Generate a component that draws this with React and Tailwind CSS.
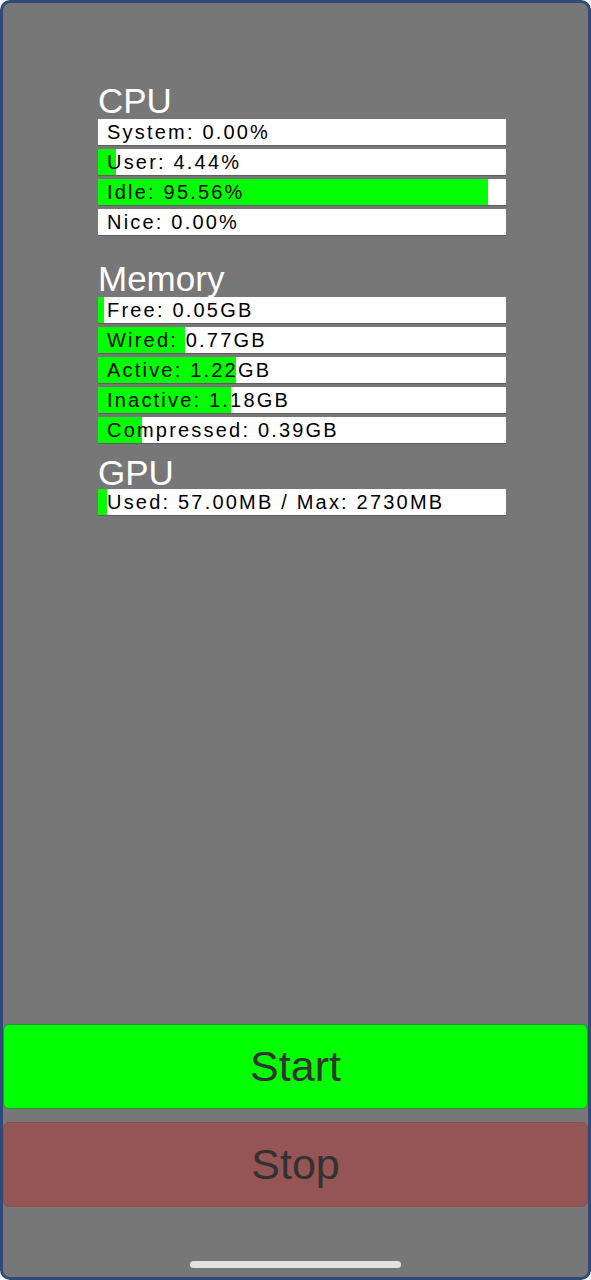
import React from "react";

const cpu = [
  { label: "System: 0.00%", pct: 0 },
  { label: "User: 4.44%", pct: 4.44 },
  { label: "Idle: 95.56%", pct: 95.56 },
  { label: "Nice: 0.00%", pct: 0 },
];

const totalMem = 3.62;
const memory = [
  { label: "Free: 0.05GB", pct: (0.05 / totalMem) * 100 },
  { label: "Wired: 0.77GB", pct: (0.77 / totalMem) * 100 },
  { label: "Active: 1.22GB", pct: (1.22 / totalMem) * 100 },
  { label: "Inactive: 1.18GB", pct: (1.18 / totalMem) * 100 },
  { label: "Compressed: 0.39GB", pct: (0.39 / totalMem) * 100 },
];

const gpu = [{ label: "Used: 57.00MB / Max: 2730MB", pct: (57 / 2730) * 100 }];

function StatRow({ label, pct }) {
  return (
    <div className="relative h-[26px] w-[408px] bg-white shadow-[0_1px_0_#5e5e5e]">
      <div
        className="absolute top-0 bottom-0 left-0 bg-[#00ff00]"
        style={{ width: `${pct}%` }}
      />
      <div className="relative pl-[9px] text-[20px] leading-[26px] tracking-[2.2px] text-black whitespace-nowrap">
        {label}
      </div>
    </div>
  );
}

function StatList({ items }) {
  return (
    <div className="flex flex-col gap-[4px]">
      {items.map((item) => (
        <StatRow key={item.label} label={item.label} pct={item.pct} />
      ))}
    </div>
  );
}

export default function App() {
  return (
    <div
      className="flex h-[1280px] w-[591px] flex-col overflow-hidden rounded-[10px] border-[3px] border-[#30497a] bg-[#777777]"
      style={{ fontFamily: '"Liberation Sans", Arial, sans-serif' }}
    >
      <div className="flex flex-col pt-[80px] pl-[95px]">
        <div className="h-[36px] text-[35px] leading-[36px] text-white">CPU</div>
        <StatList items={cpu} />

        <div className="mt-[26px] h-[36px] text-[35px] leading-[36px] text-white">
          Memory
        </div>
        <StatList items={memory} />

        <div className="mt-[13px] h-[33px] text-[35px] leading-[33px] text-white">
          GPU
        </div>
        <StatList items={gpu} />
      </div>

      <div className="mt-auto flex flex-col pb-[9px]">
        <button className="h-[85px] w-full rounded-[6px] border border-[#1f9a1f] bg-[#00ff00] text-[43px] leading-[83px] text-[#323232]">
          Start
        </button>
        <button className="mt-[13px] h-[85px] w-full rounded-[6px] border border-[#8c4d4d] bg-[#965555] text-[43px] leading-[83px] text-[#323232]">
          Stop
        </button>
        <div className="mx-auto mt-[54px] h-[7px] w-[211px] rounded-full bg-[#e2e2e2]" />
      </div>
    </div>
  );
}
